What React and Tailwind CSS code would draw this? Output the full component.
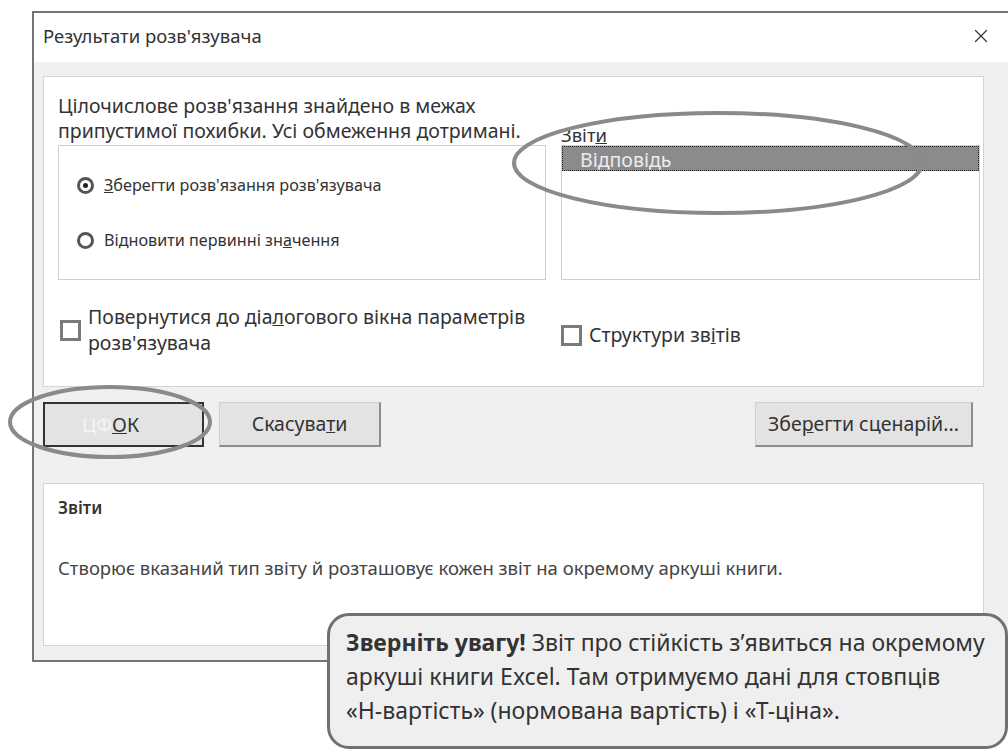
import { X } from "lucide-react";

const font = { fontFamily: '"Noto Sans", "Open Sans", sans-serif' };

const Radio = ({ checked, children }) => (
  <div className="flex items-center gap-[10px]">
    <span className="w-[17px] h-[17px] rounded-full border-[3px] border-[#555] bg-white flex items-center justify-center">
      {checked && <span className="w-[5px] h-[5px] rounded-full bg-[#222]" />}
    </span>
    <span className="text-[16.2px] text-[#333] leading-5">{children}</span>
  </div>
);

const CheckBox = ({ children }) => (
  <div className="flex items-center gap-[7px]">
    <span className="w-[21px] h-[21px] shrink-0 border-[3px] border-[#7a7a7a] bg-white" />
    <span className="text-[19.5px] text-[#333] leading-[26px]">{children}</span>
  </div>
);

const Button = ({ children, className = "" }) => (
  <button
    className={`h-[45px] bg-[#e3e3e3] text-[19.5px] text-[#333] border border-[#cfcfcf] border-r-2 border-b-2 border-r-[#8c8c8c] border-b-[#8c8c8c] ${className}`}
  >
    {children}
  </button>
);

export default function App() {
  return (
    <div className="relative w-[1008px] h-[751px] bg-white overflow-hidden" style={font}>
      {/* dialog window */}
      <div className="ml-[32px] mt-[11px] w-[1000px] border-2 border-[#747474] bg-[#f0f0f0]">
        <div className="h-[49px] bg-white flex items-center justify-between pl-[9px] pr-[38px] pb-[4px]">
          <span className="text-[18.5px] text-[#333]">Результати розв'язувача</span>
          <X size={22} strokeWidth={1.3} className="text-[#333]" />
        </div>

        <div className="pl-[9px] pr-[16px] pt-[14px] pb-[14px] w-[966px]">
          <div className="bg-white border border-[#d4d4d4] pl-[14px] pr-[11px] pt-[16px] h-[311px]">
            <div className="grid grid-cols-[488px_419px] gap-x-[15px] items-end">
              <div>
                <p className="text-[19.5px] leading-[25px] text-[#333] mb-[2px]">
                  Цілочислове розв'язання знайдено в межах
                  <br />
                  припустимої похибки. Усі обмеження дотримані.
                </p>
                <div className="h-[135px] border border-[#cfcfcf] pl-[18px] flex flex-col justify-center gap-[35px]">
                  <Radio checked>
                    <u>З</u>берегти розв'язання розв'язувача
                  </Radio>
                  <Radio>
                    Відновити первинні зн<u>а</u>чення
                  </Radio>
                </div>
              </div>
              <div>
                <p className="text-[18.5px] leading-5 text-[#333]">
                  Звіт<u>и</u>
                </p>
                <div className="h-[135px] border border-[#cfcfcf] bg-white">
                  <div className="h-[25px] bg-[#8b8b8e] border border-dotted border-[#222] pl-[17px] text-[19.5px] leading-[25px] text-[#ececec]">
                    Відповідь
                  </div>
                </div>
              </div>
            </div>

            <div className="grid grid-cols-[488px_419px] gap-x-[15px] items-center mt-[24px]">
              <div className="pl-[2px]">
                <CheckBox>
                  Повернутися до діа<u>л</u>огового вікна параметрів
                  <br />
                  розв'язувача
                </CheckBox>
              </div>
              <div className="pt-[10px]">
                <CheckBox>
                  Структури зв<u>і</u>тів
                </CheckBox>
              </div>
            </div>
          </div>

          <div className="flex items-center mt-[15px] pr-[11px]">
            <button className="w-[161px] h-[45px] pr-[26px] bg-[#e3e3e3] border-2 border-[#333] text-[19.5px] text-[#333]">
              <span className="text-[#f4f4f4]">ЦФ</span>
              <u>О</u>К
            </button>
            <Button className="w-[162px] ml-[15px]">
              Скасува<u>т</u>и
            </Button>
            <Button className="w-[218px] ml-auto">
              Збе<u>р</u>егти сценарій...
            </Button>
          </div>

          <div className="mt-[36px] h-[163px] bg-white border border-[#d4d4d4] pl-[14px] pt-[11px]">
            <p className="text-[17px] font-semibold text-[#333]">Звіти</p>
            <p className="mt-[33px] text-[18.5px] text-[#444]">
              Створює вказаний тип звіту й розташовує кожен звіт на окремому аркуші книги.
            </p>
          </div>
        </div>
      </div>

      {/* highlight rings */}
      <svg className="absolute inset-0 pointer-events-none" width="1008" height="751">
        <ellipse cx="718" cy="163" rx="204" ry="50" fill="none" stroke="#8a8a8a" strokeWidth="4" />
        <ellipse cx="110" cy="422" rx="100" ry="35" fill="none" stroke="#8a8a8a" strokeWidth="4" />
      </svg>

      {/* note */}
      <div className="absolute left-[327px] top-[613px] w-[681px] h-[136px] rounded-[22px] border-[3px] border-[#707070] bg-[#efefef] pl-[16px] pt-[9px]">
        <p className="text-[23px] leading-[34px] text-[#333]">
          <b>Зверніть увагу!</b> Звіт про стійкість з’явиться на окремому
          <br />
          аркуші книги Excel. Там отримуємо дані для стовпців
          <br />
          «Н-вартість» (нормована вартість) і «Т-ціна».
        </p>
      </div>
    </div>
  );
}
